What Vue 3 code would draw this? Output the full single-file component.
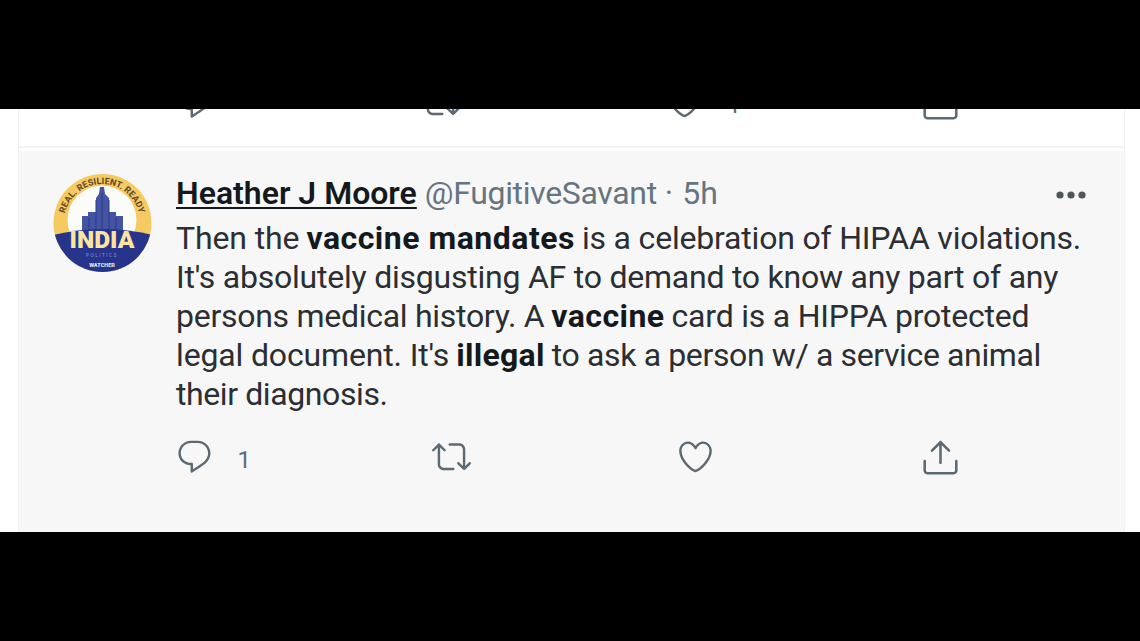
<script setup>
const REPLY =
  "M14.046 2.242l-4.148-.01h-.002c-4.374 0-7.8 3.427-7.8 7.802 0 4.098 3.186 7.206 7.465 7.37v3.828c0 .108.044.286.12.403.142.225.384.347.632.347.138 0 .277-.038.402-.118.264-.168 6.473-4.14 8.088-5.506 1.902-1.61 3.04-3.97 3.043-6.312v-.017c-.006-4.367-3.43-7.787-7.8-7.788zm3.787 12.972c-1.134.96-4.862 3.405-6.772 4.643V16.67c0-.414-.335-.75-.75-.75h-.396c-3.66 0-6.318-2.476-6.318-5.886 0-3.534 2.768-6.302 6.3-6.302l4.147.01h.002c3.532 0 6.3 2.766 6.302 6.296-.003 1.91-.942 3.844-2.514 5.176z";
const RETWEET =
  "M23.77 15.67c-.292-.293-.767-.293-1.06 0l-2.22 2.22V7.65c0-2.068-1.683-3.75-3.75-3.75h-5.85c-.414 0-.75.336-.75.75s.336.75.75.75h5.85c1.24 0 2.25 1.01 2.25 2.25v10.24l-2.22-2.22c-.293-.293-.768-.293-1.06 0s-.294.768 0 1.06l3.5 3.5c.145.147.337.22.53.22s.383-.072.53-.22l3.5-3.5c.294-.292.294-.767 0-1.06zm-10.66 3.28H7.26c-1.24 0-2.25-1.01-2.25-2.25V6.46l2.22 2.22c.148.147.34.22.532.22s.384-.073.53-.22c.293-.293.293-.768 0-1.06l-3.5-3.5c-.293-.294-.768-.294-1.06 0l-3.5 3.5c-.294.292-.294.767 0 1.06s.767.293 1.06 0l2.22-2.22V16.7c0 2.068 1.683 3.75 3.75 3.75h5.85c.414 0 .75-.336.75-.75s-.337-.75-.75-.75z";
const LIKE =
  "M12 21.638h-.014C9.403 21.59 1.95 14.856 1.95 8.478c0-3.064 2.525-5.754 5.403-5.754 2.29 0 3.83 1.58 4.646 2.73.814-1.148 2.354-2.73 4.645-2.73 2.88 0 5.404 2.69 5.404 5.755 0 6.376-7.454 13.11-10.037 13.157H12zM7.354 4.225c-2.08 0-3.903 1.988-3.903 4.255 0 5.74 7.034 11.596 8.55 11.658 1.518-.062 8.55-5.917 8.55-11.658 0-2.267-1.823-4.255-3.903-4.255-2.528 0-3.94 2.936-3.952 2.965-.23.562-1.156.562-1.387 0-.014-.03-1.425-2.965-3.954-2.965z";
const SHARE =
  "M17.53 7.47l-5-5c-.293-.293-.768-.293-1.06 0l-5 5c-.294.293-.294.768 0 1.06s.767.294 1.06 0l3.72-3.72V15c0 .414.336.75.75.75s.75-.336.75-.75V4.81l3.72 3.72c.146.147.338.22.53.22s.384-.072.53-.22c.293-.293.293-.767 0-1.06zM19.708 21.944H4.292C3.028 21.944 2 20.916 2 19.652V14c0-.414.336-.75.75-.75s.75.336.75.75v5.652c0 .437.355.792.792.792h15.416c.437 0 .792-.355.792-.792V14c0-.414.336-.75.75-.75s.75.336.75.75v5.652c0 1.264-1.028 2.292-2.292 2.292z";

const previousActions = [
  { key: "reply", path: REPLY, count: "" },
  { key: "retweet", path: RETWEET, count: "" },
  { key: "like", path: LIKE, count: "1" },
  { key: "share", path: SHARE, count: "" }
];

const actions = [
  { key: "reply", path: REPLY, count: "1" },
  { key: "retweet", path: RETWEET, count: "" },
  { key: "like", path: LIKE, count: "" },
  { key: "share", path: SHARE, count: "" }
];

// tracking is the letter spacing in px
const lines = [
  [
    { text: "Then the", tracking: -0.12 },
    { text: "vaccine mandates", bold: true, tracking: 0.5 },
    { text: "is a celebration of HIPAA violations.", tracking: -0.19 }
  ],
  [{ text: "It's absolutely disgusting AF to demand to know any part of any", tracking: -0.23 }],
  [
    { text: "persons medical history. A", tracking: -0.28 },
    { text: "vaccine", bold: true, tracking: 0.45 },
    { text: "card is a HIPPA protected", tracking: -0.22 }
  ],
  [
    { text: "legal document. It's", tracking: -0.15 },
    { text: "illegal", bold: true, tracking: 0.3 },
    { text: "to ask a person w/ a service animal", tracking: -0.37 }
  ],
  [{ text: "their diagnosis.", tracking: -0.4 }]
];
</script>

<template>
  <div class="frame">
    <main class="screen">
      <div class="timeline">
        <div class="previous">
          <div class="actions actions-previous">
            <div v-for="item in previousActions" :key="item.key" class="action" :class="item.key">
              <svg viewBox="0 0 24 24"><path :d="item.path" /></svg>
              <span v-if="item.count" class="count">{{ item.count }}</span>
            </div>
          </div>
        </div>

        <article class="tweet">
          <svg class="avatar" viewBox="0 0 100 100">
            <defs>
              <clipPath id="badge"><circle cx="49.5" cy="50" r="49" /></clipPath>
              <path id="arc" d="M11 49 A38 38 0 0 1 87 49" />
            </defs>
            <g clip-path="url(#badge)">
              <rect width="100" height="100" fill="#f6ca62" />
              <circle cx="49" cy="47" r="34.5" fill="#fbfbf8" />
              <path
                d="M29 70V43h6v-4h8V25l3-4 1-7h4l1 7 4 4v14h7v4h7v27z"
                fill="#4454a2"
              />
              <path d="M36 44v16M43 27v33M49 20v40M56 27v33M63 44v16" stroke="#2b3a87" />
              <path d="M0 62Q50 50 100 62V100H0z" fill="#27348b" />
            </g>
            <text class="motto">
              <textPath href="#arc" startOffset="50%">REAL. RESILIENT. READY</textPath>
            </text>
            <text class="country" x="49" y="75" textLength="65" lengthAdjust="spacingAndGlyphs">INDIA</text>
            <text class="politics" x="49" y="84">POLITICS</text>
            <text class="watcher" x="49" y="94">WATCHER</text>
          </svg>

          <div class="content">
            <header class="byline">
              <span class="name">Heather J Moore</span>
              <span class="handle">@FugitiveSavant</span>
              <span class="dot">·</span>
              <span class="time">5h</span>
              <svg class="more" viewBox="0 0 30 8">
                <circle cx="4" cy="4" r="3.6" />
                <circle cx="15" cy="4" r="3.6" />
                <circle cx="26" cy="4" r="3.6" />
              </svg>
            </header>

            <div class="body">
              <div v-for="(line, i) in lines" :key="i" class="line">
                <span
                  v-for="(part, j) in line"
                  :key="j"
                  :class="{ bold: part.bold }"
                  :style="{ letterSpacing: `${part.tracking}px` }"
                  >{{ part.text }}</span
                >
              </div>
            </div>

            <div class="actions">
              <div v-for="item in actions" :key="item.key" class="action" :class="item.key">
                <svg viewBox="0 0 24 24"><path :d="item.path" /></svg>
                <span v-if="item.count" class="count">{{ item.count }}</span>
              </div>
            </div>
          </div>
        </article>
      </div>
    </main>
  </div>
</template>

<style>
body {
  background: #000;
}
</style>

<style scoped>
.frame {
  box-sizing: border-box;
  width: 1140px;
  height: 641px;
  padding-top: 109px;
  background: #000;
  font-family: Roboto, "Liberation Sans", sans-serif;
  overflow: hidden;
}

.screen {
  height: 423px;
  padding: 0 15px 0 18px;
  background: #fff;
  overflow: hidden;
}

.timeline {
  display: flex;
  flex-direction: column;
  height: 100%;
  border-left: 1px solid #f0f1f1;
  border-right: 1px solid #f0f1f1;
}

.previous {
  display: flex;
  align-items: flex-end;
  box-sizing: border-box;
  height: 39px;
  padding: 0 0 25px 157px;
  border-bottom: 2px solid #f3f4f4;
}

.tweet {
  display: flex;
  flex: 1;
  gap: 23px;
  margin-top: 3px;
  padding: 22px 0 0 34px;
  background: #f7f7f7;
}

.avatar {
  flex: none;
  width: 100px;
  height: 100px;
}

.motto {
  fill: #5f4a28;
  font-size: 9px;
  font-weight: 700;
  text-anchor: middle;
}

.country {
  fill: #fbe3a0;
  font-size: 23px;
  font-weight: 900;
  text-anchor: middle;
}

.politics {
  fill: #8d97cc;
  font-size: 4.5px;
  letter-spacing: 1.6px;
  text-anchor: middle;
}

.watcher {
  fill: #dfe4f7;
  font-size: 5.5px;
  font-weight: 900;
  text-anchor: middle;
}

.content {
  flex: 1;
}

.byline {
  display: flex;
  align-items: center;
  gap: 8px;
  height: 39px;
  color: #66757f;
  font-size: 32px;
  white-space: nowrap;
}

.name {
  color: #14191e;
  font-weight: 600;
  text-decoration: underline;
  text-decoration-thickness: 2px;
  text-underline-offset: 3px;
  text-decoration-skip-ink: none;
}

.handle {
  letter-spacing: -0.33px;
}

.time {
  margin-left: 1px;
}

.more {
  width: 30px;
  height: 8px;
  margin-top: 4px;
  margin-left: auto;
  margin-right: 38px;
  fill: #4c565d;
}

.body {
  margin: 7px 0 22.5px;
}

.line {
  display: flex;
  gap: 7px;
  height: 39px;
  color: #2b2e32;
  font-size: 32px;
  line-height: 39px;
  white-space: nowrap;
}

.bold {
  color: #14191e;
  font-weight: 700;
}

.actions {
  display: grid;
  grid-template-columns: 257px 244px 244px 42px;
  margin-left: -1.5px;
}

.actions-previous {
  grid-template-columns: 246.5px 243.5px 255px 42px;
}

.action {
  display: flex;
  align-items: flex-start;
  height: 39px;
}

.action svg {
  width: 39px;
  height: 39px;
  fill: #5c6a73;
}

.share svg {
  width: 41px;
  height: 41px;
}

.count {
  margin-left: 24px;
  color: #5c6a73;
  font-size: 24px;
  line-height: 46px;
}
</style>
